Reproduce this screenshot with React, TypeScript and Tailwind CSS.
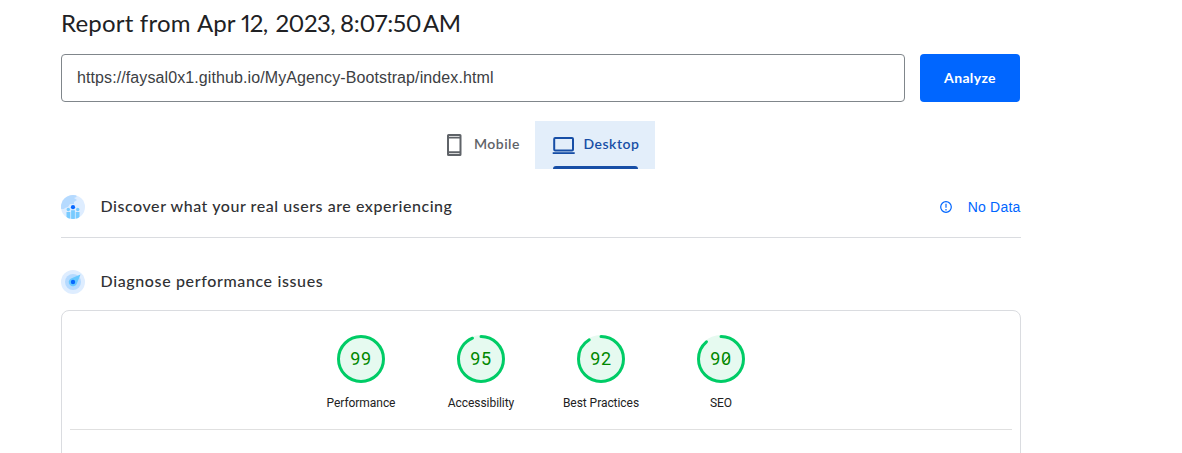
const scores = [
  { label: 'Performance', value: 99, arc: 100 },
  { label: 'Accessibility', value: 95, arc: 93.8 },
  { label: 'Best Practices', value: 92, arc: 91.2 },
  { label: 'SEO', value: 90, arc: 88.8 },
];

function Gauge({ label, value, arc }: { label: string; value: number; arc: number }) {
  return (
    <div className="flex w-[120px] flex-col items-center">
      <div className="grid h-12 w-12 place-items-center">
        <svg viewBox="0 0 48 48" className="col-start-1 row-start-1 h-12 w-12">
          <circle cx="24" cy="24" r="24" fill="#e6faf0" />
          <circle
            cx="24"
            cy="24"
            r="22.5"
            fill="none"
            stroke="#00cc66"
            strokeWidth="3"
            strokeLinecap="round"
            pathLength="100"
            strokeDasharray={`${arc} 100`}
            transform="rotate(-90 24 24)"
          />
          {value === 90 && <path d="M26.5 27.3 32.3 21" stroke="#080" strokeWidth="1.2" />}
        </svg>
        <span className="z-10 col-start-1 row-start-1 font-['Roboto'] text-[18px] leading-6 tracking-[0.6px] text-[#008800]">
          {value}
        </span>
      </div>
      <span className="mt-[10px] font-['Roboto'] text-[12px] leading-5 tracking-[-0.05px] whitespace-nowrap text-[#212121]">{label}</span>
    </div>
  );
}

function UsersIcon() {
  return (
    <svg viewBox="0 0 24 24" className="h-6 w-6">
      <defs>
        <clipPath id="globe">
          <circle cx="12" cy="12" r="12" />
        </clipPath>
      </defs>
      <g clipPath="url(#globe)">
        <path fill="#deedff" d="M0 0h24v24H0z" />
        <path fill="#b5daff" d="M0 0h15.5v2l-2.5 1 3 2-3 2v2H9l-2 3-3 1-1 1H0z" />
        <g fill="#78cbff">
          <circle cx="7.3" cy="14.5" r="1.7" />
          <circle cx="16.7" cy="14.5" r="1.7" />
          <path d="M5.5 17h3.8v7H5.5zM14.7 17h3.8v7h-3.8zM10.1 15.3h3.8V24h-3.8z" />
        </g>
        <circle cx="12" cy="12.2" r="2.1" fill="#0868ff" />
      </g>
    </svg>
  );
}

function CompassIcon() {
  return (
    <svg viewBox="0 0 24 24" className="h-6 w-6">
      <circle cx="12" cy="12" r="12" fill="#deedff" />
      <circle cx="12" cy="12" r="8" fill="#b5daff" />
      <path d="M19.5 4.6 10 8.4A4.2 4.2 0 1 0 15.7 14z" fill="#66c8ff" />
      <circle cx="12" cy="12" r="2.2" fill="#0868ff" />
    </svg>
  );
}

export default function App() {
  return (
    <div className="h-[453px] w-full overflow-hidden bg-white pl-[61px] font-['Lato',sans-serif] text-[#303134]">
      <div className="flex w-[960px] flex-col">
        <h1 className="mt-[7px] mb-px flex text-[24px] leading-8 whitespace-nowrap text-[#202124] proportional-nums">
          <span className="w-[136px] tracking-[0.2px]">Report from </span>
          <span className="w-[44px]">Apr </span>
          <span className="w-[34.5px] tracking-[-0.7px]">12, </span>
          <span className="w-[64.5px] tracking-[-0.5px]">2023, </span>
          <span className="w-[83px] tracking-[-0.3px]">8:07:50 </span>
          <span className="tracking-[-0.6px]">AM</span>
        </h1>
        <div className="mt-[14px] flex gap-[15px]">
          <div className="flex h-12 w-[844px] items-center rounded border border-[#80868b] px-[15px] pb-px font-['Liberation_Sans'] text-[16px] tracking-[0.1px] text-[#3c4043]">
            https://faysal0x1.github.io/MyAgency-Bootstrap/index.html
          </div>
          <button className="h-12 w-[100px] rounded bg-[#0066ff] pb-0.5 text-[14px] font-bold tracking-[0.35px] text-white">Analyze</button>
        </div>
        <div className="mt-[19px] flex h-12 pl-[374px]">
          <div className="flex w-[100px] items-center pl-[9px] text-[#5f6368]">
            <svg viewBox="0 0 20 24" className="h-6 w-5">
              <path fill="currentColor" fillRule="evenodd" d="M4.5 1h11.500a1.500 1.500 0 0 1 1.500 1.500v19a1.500 1.500 0 0 1-1.500 1.500H4.500a1.500 1.500 0 0 1-1.500-1.500v-19A1.500 1.500 0 0 1 4.500 1zM5 3v.8h10.500V3zM5 5.500v12.700h10.500V5.500zM5 20.200v.8h10.500v-.8z" />
            </svg>
            <span className="ml-[10px] pb-[3px] text-[14px] font-semibold tracking-[0.45px]">Mobile</span>
          </div>
          <div className="flex w-[120px] flex-col bg-[#e3eefa] px-[18px] text-[#174ea6]">
            <div className="flex h-[45px] items-center pt-[3px]">
              <svg viewBox="0 0 24 24" className="-ml-px h-6 w-6 shrink-0">
                <rect x="2.2" y="5" width="18.8" height="12.5" rx="1" fill="none" stroke="currentColor" strokeWidth="2" />
                <path d="M.7 19.200h22v1.800H.7z" fill="currentColor" />
              </svg>
              <span className="ml-[7.5px] pb-[3px] text-[14px] font-semibold tracking-[0.5px]">Desktop</span>
            </div>
            <div className="h-[3px] w-[85px] rounded-t-[3px] bg-[#174ea6]" />
          </div>
        </div>
        <section className="mt-[26px] flex h-6 items-center">
          <UsersIcon />
          <h2 className="ml-[15.5px] pb-[2px] text-[16px] font-medium tracking-[0.55px]">Discover what your real users are experiencing</h2>
          <div className="ml-auto flex items-center gap-[15px] pr-[0.5px] text-[#0066ff]">
            <svg viewBox="0 0 14 14" className="h-[14px] w-[14px]" fill="none" stroke="currentColor" strokeWidth="1.2">
              <circle cx="7" cy="7" r="5.3" />
              <path d="M7 3.8v4M7 9v1.4" />
            </svg>
            <span className="font-['Liberation_Sans'] text-[14px] tracking-[0.2px]">No Data</span>
          </div>
        </section>
        <div className="mt-[18px] h-px bg-[#dadce0]" />
        <section className="mt-8 flex h-6 items-center">
          <CompassIcon />
          <h2 className="ml-[15.5px] pb-[2px] text-[16px] font-medium tracking-[0.63px]">Diagnose performance issues</h2>
        </section>
        <div className="mt-4 h-[180px] rounded-lg border border-[#dadce0] px-2 pt-6">
          <div className="flex justify-center">
            {scores.map((score) => (
              <Gauge key={score.label} {...score} />
            ))}
          </div>
          <div className="mt-4 h-px bg-[#e0e0e0]" />
        </div>
      </div>
    </div>
  );
}
